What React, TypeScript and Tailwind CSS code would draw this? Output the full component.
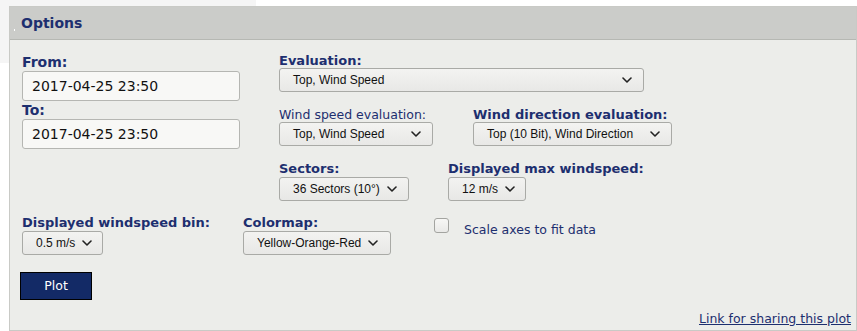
import React from "react";

const navy = "text-[#1d2f6f]";

function Chevron() {
  return (
    <svg width="10" height="6" viewBox="0 0 10 6" className="shrink-0">
      <path d="M1 1 L5 5 L9 1" fill="none" stroke="#222" strokeWidth="1.6" strokeLinecap="round" strokeLinejoin="round" />
    </svg>
  );
}

function Select({ value, w, spread = true }: { value: string; w: string; spread?: boolean }) {
  return (
    <div
      className={`${w} h-[24px] flex items-center ${spread ? "justify-between" : "gap-[7px]"} pl-[13px] pr-[11px] rounded-[3px] border border-[#a9aaa6] bg-gradient-to-b from-[#f3f3f1] to-[#e8e8e6] text-[12px] text-[#111] font-['Liberation_Sans',Arial,sans-serif] whitespace-nowrap`}
    >
      <span>{value}</span>
      <Chevron />
    </div>
  );
}

function Label({ children, bold = true, lh = "leading-[15px]" }: { children: React.ReactNode; bold?: boolean; lh?: string }) {
  return (
    <div className={`${navy} ${bold ? "font-bold text-[13px]" : "text-[12.5px]"} ${lh} whitespace-nowrap`}>
      {children}
    </div>
  );
}

function DateInput({ value }: { value: string }) {
  return (
    <div className="w-[218px] h-[30px] flex items-center pl-[9px] rounded-[3px] border border-[#b5b6b2] bg-[#f8f8f6] text-[14px] text-[#111]">
      {value}
    </div>
  );
}

export default function App() {
  return (
    <div className="relative w-[857px] h-[331px] bg-white pt-[6px] pl-[9px] font-['DejaVu_Sans',sans-serif] overflow-hidden">
      {/* faint backdrop behind the panel */}
      <div className="absolute left-0 top-0 w-[256px] h-[63px] bg-[#f5f5f5]" />

      <div className="relative w-[848px] h-[325px] border border-[#c9cac6] bg-[#ecedea] flex flex-col">
        <div className="h-[33px] shrink-0 flex items-center pl-[4px] bg-[#cbccc9] border-b border-[#b6b8b3]">
          <span className="w-[1px] h-[2px] bg-white self-end mb-[8px]" />
          <span className={`ml-[6px] ${navy} font-bold text-[14px]`}>Options</span>
        </div>

        <div className="pl-[12px] pt-[14px] flex flex-col">
          <div className="flex">
            <div className="w-[218px] flex flex-col">
              <div className={`${navy} font-bold text-[14px] leading-[17px]`}>From:</div>
              <DateInput value="2017-04-25 23:50" />
              <div className={`${navy} font-bold text-[14px] leading-[18px]`}>To:</div>
              <DateInput value="2017-04-25 23:50" />
            </div>

            <div className="ml-[39px] flex flex-col">
              <Label lh="leading-[14px]">Evaluation:</Label>
              <Select value="Top, Wind Speed" w="w-[365px]" />

              <div className="flex mt-[15px]">
                <div className="w-[194px]">
                  <Label bold={false}>Wind speed evaluation:</Label>
                  <Select value="Top, Wind Speed" w="w-[154px]" />
                </div>
                <div>
                  <Label>Wind direction evaluation:</Label>
                  <Select value="Top (10 Bit), Wind Direction" w="w-[199px]" />
                </div>
              </div>

              <div className="flex mt-[15px]">
                <div className="w-[169px]">
                  <Label lh="leading-[16px]">Sectors:</Label>
                  <Select value="36 Sectors (10°)" w="w-[130px]" spread={false} />
                </div>
                <div>
                  <Label lh="leading-[16px]">Displayed max windspeed:</Label>
                  <Select value="12 m/s" w="w-[78px]" spread={false} />
                </div>
              </div>
            </div>
          </div>

          <div className="flex mt-[14px]">
            <div className="w-[221px]">
              <Label lh="leading-[16px]">Displayed windspeed bin:</Label>
              <Select value="0.5 m/s" w="w-[81px]" spread={false} />
            </div>
            <div className="w-[191px]">
              <Label lh="leading-[16px]">Colormap:</Label>
              <Select value="Yellow-Orange-Red" w="w-[148px]" spread={false} />
            </div>
            <div className="flex items-start">
              <div className="mt-[3px] w-[15px] h-[15px] rounded-[3px] border border-[#a3a4a0] bg-gradient-to-b from-[#f7f7f5] to-[#e9e9e7]" />
              <div className={`ml-[15px] mt-[7px] ${navy} text-[12.5px] leading-[15px]`}>Scale axes to fit data</div>
            </div>
          </div>

          <button className="mt-[17px] -ml-[2px] w-[72px] h-[28px] bg-[#132a66] border border-black text-white text-[12.5px] font-['DejaVu_Sans',sans-serif]">
            Plot
          </button>

          <div className="mt-[11px] pr-[5px] flex justify-end">
            <a href="#" className={`${navy} underline text-[12.5px] leading-[15px]`}>
              Link for sharing this plot
            </a>
          </div>
        </div>
      </div>
    </div>
  );
}
